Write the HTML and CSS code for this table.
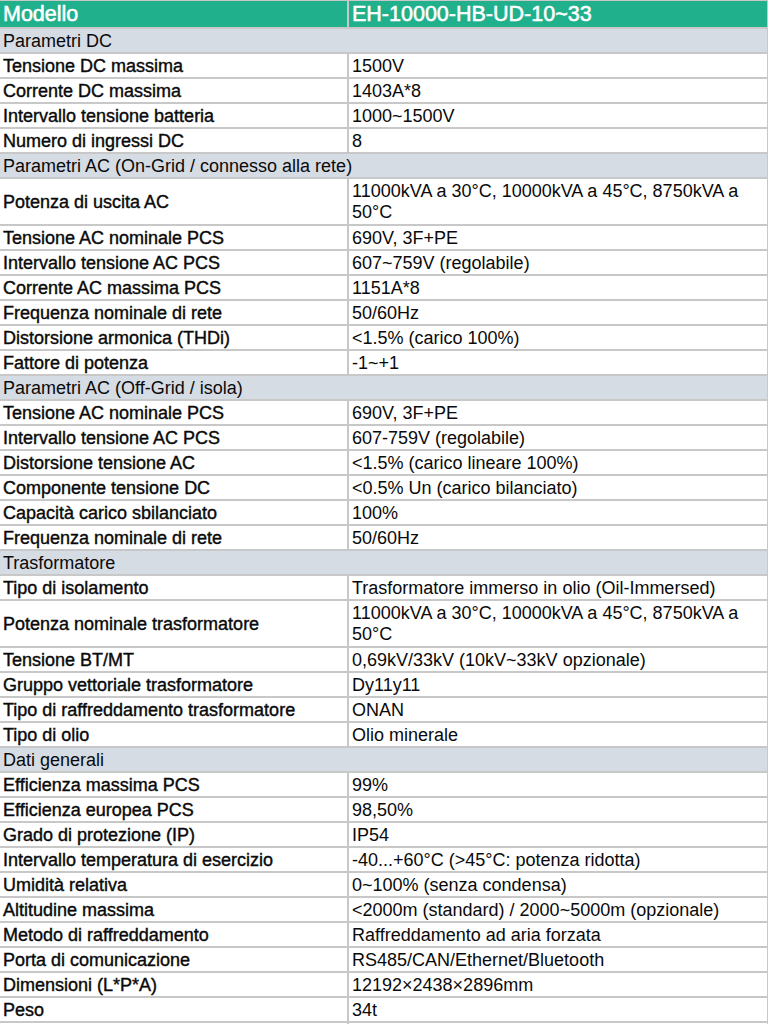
FILE: index.html
```html
<!DOCTYPE html>
<html lang="it">
<head>
<meta charset="utf-8">
<title>EH-10000-HB-UD-10~33</title>
<link rel="stylesheet" href="styles.css">
</head>
<body>
<div class="spec">
  <div class="head">Modello</div><div class="head">EH-10000-HB-UD-10~33</div>

  <div class="section">Parametri DC</div>
  <div class="label">Tensione DC massima</div><div class="value">1500V</div>
  <div class="label">Corrente DC massima</div><div class="value">1403A*8</div>
  <div class="label">Intervallo tensione batteria</div><div class="value">1000~1500V</div>
  <div class="label">Numero di ingressi DC</div><div class="value">8</div>

  <div class="section">Parametri AC (On-Grid / connesso alla rete)</div>
  <div class="label double">Potenza di uscita AC</div><div class="value double">11000kVA a 30°C, 10000kVA a 45°C, 8750kVA a 50°C</div>
  <div class="label">Tensione AC nominale PCS</div><div class="value">690V, 3F+PE</div>
  <div class="label">Intervallo tensione AC PCS</div><div class="value">607~759V (regolabile)</div>
  <div class="label">Corrente AC massima PCS</div><div class="value">1151A*8</div>
  <div class="label">Frequenza nominale di rete</div><div class="value">50/60Hz</div>
  <div class="label">Distorsione armonica (THDi)</div><div class="value">&lt;1.5% (carico 100%)</div>
  <div class="label">Fattore di potenza</div><div class="value">-1~+1</div>

  <div class="section">Parametri AC (Off-Grid / isola)</div>
  <div class="label">Tensione AC nominale PCS</div><div class="value">690V, 3F+PE</div>
  <div class="label">Intervallo tensione AC PCS</div><div class="value">607-759V (regolabile)</div>
  <div class="label">Distorsione tensione AC</div><div class="value">&lt;1.5% (carico lineare 100%)</div>
  <div class="label">Componente tensione DC</div><div class="value">&lt;0.5% Un (carico bilanciato)</div>
  <div class="label">Capacità carico sbilanciato</div><div class="value">100%</div>
  <div class="label">Frequenza nominale di rete</div><div class="value">50/60Hz</div>

  <div class="section">Trasformatore</div>
  <div class="label">Tipo di isolamento</div><div class="value">Trasformatore immerso in olio (Oil-Immersed)</div>
  <div class="label double">Potenza nominale trasformatore</div><div class="value double">11000kVA a 30°C, 10000kVA a 45°C, 8750kVA a 50°C</div>
  <div class="label">Tensione BT/MT</div><div class="value">0,69kV/33kV (10kV~33kV opzionale)</div>
  <div class="label">Gruppo vettoriale trasformatore</div><div class="value">Dy11y11</div>
  <div class="label">Tipo di raffreddamento trasformatore</div><div class="value">ONAN</div>
  <div class="label">Tipo di olio</div><div class="value">Olio minerale</div>

  <div class="section">Dati generali</div>
  <div class="label">Efficienza massima PCS</div><div class="value">99%</div>
  <div class="label">Efficienza europea PCS</div><div class="value">98,50%</div>
  <div class="label">Grado di protezione (IP)</div><div class="value">IP54</div>
  <div class="label">Intervallo temperatura di esercizio</div><div class="value">-40...+60°C (&gt;45°C: potenza ridotta)</div>
  <div class="label">Umidità relativa</div><div class="value">0~100% (senza condensa)</div>
  <div class="label">Altitudine massima</div><div class="value">&lt;2000m (standard) / 2000~5000m (opzionale)</div>
  <div class="label">Metodo di raffreddamento</div><div class="value">Raffreddamento ad aria forzata</div>
  <div class="label">Porta di comunicazione</div><div class="value">RS485/CAN/Ethernet/Bluetooth</div>
  <div class="label">Dimensioni (L*P*A)</div><div class="value">12192×2438×2896mm</div>
  <div class="label">Peso</div><div class="value">34t</div>
  <div class="label"></div><div class="value"></div>
</div>
</body>
</html>
```

FILE: styles.css
```css
html, body {
  margin: 0;
  padding: 0;
  background: #ffffff;
}

.spec {
  width: 768px;
  box-sizing: border-box;
  padding: 1px 1px 0 0;
  display: grid;
  grid-template-columns: 347px 1fr;
  gap: 2px;
  background: #c8c8c8;
  font-family: "Liberation Sans", Arial, sans-serif;
  font-size: 18px;
  color: #0a0a0a;
}

.head {
  background: #20b08c;
  color: #ffffff;
  font-size: 21.5px;
  line-height: 26px;
  height: 26px;
  padding: 0 3px;
  -webkit-text-stroke: 0.55px #ffffff;
  white-space: nowrap;
}

.section {
  grid-column: 1 / -1;
  background: #d6dce4;
  height: 23px;
  line-height: 21px;
  padding: 2px 3px 0;
  box-sizing: border-box;
}

.label,
.value {
  background: #ffffff;
  height: 23px;
  line-height: 21px;
  padding: 2px 3px 0;
  box-sizing: border-box;
}

.label {
  -webkit-text-stroke: 0.4px #0a0a0a;
  white-space: nowrap;
}

.value {
  padding-left: 3px;
  padding-right: 4px;
}

.double {
  height: 45px;
  display: flex;
  align-items: center;
  padding-top: 1px;
}
```
